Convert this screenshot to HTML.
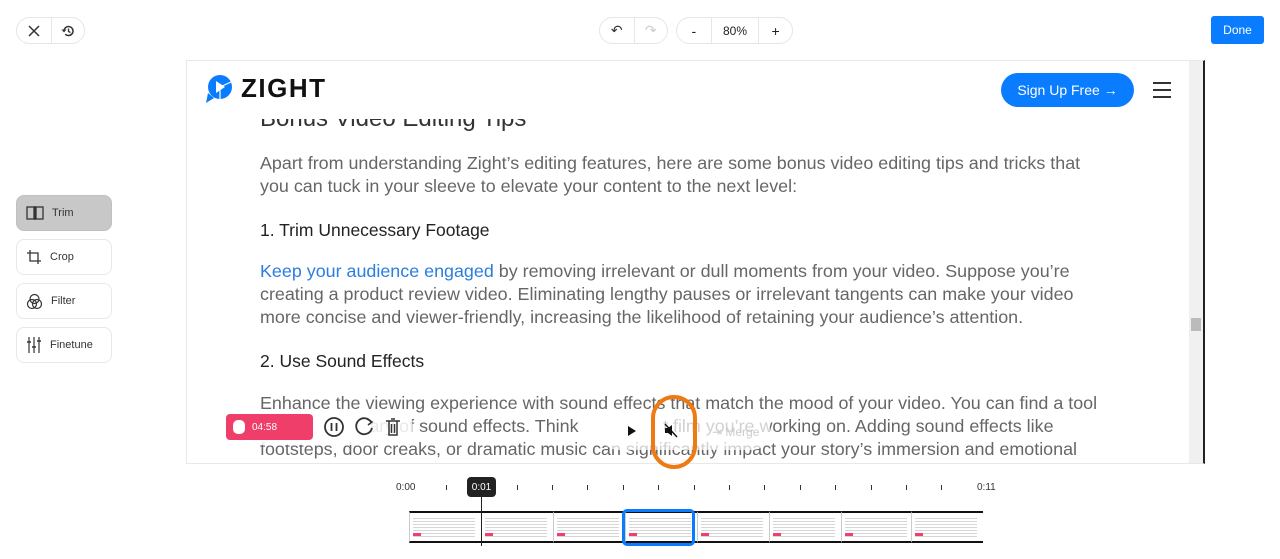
<!DOCTYPE html>
<html><head><meta charset="utf-8"><style>
*{box-sizing:border-box;margin:0;padding:0}
body{width:1280px;height:559px;background:#fff;font-family:"Liberation Sans",sans-serif;position:relative;overflow:hidden;color:#222}
.grp{position:absolute;top:17px;height:27px;border:1px solid #e6e6e6;border-radius:14px;display:flex;align-items:center;background:#fff}
.grp div{height:100%;display:flex;align-items:center;justify-content:center;font-size:12px}
.grp div+div{border-left:1px solid #e6e6e6}
.side{position:absolute;left:16px;width:96px;height:36px;border:1px solid #e8e8e8;border-radius:8px;display:flex;align-items:center;padding-left:9px;font-size:11px;color:#333;gap:8px}
.vid{position:absolute;left:186px;top:60px;width:1019px;height:404px;border:1px solid #e8e8e8;border-right:2px solid #222;overflow:hidden;background:#fff}
.t{position:absolute;left:73px;font-size:17.9px;color:#666;line-height:23px;white-space:nowrap}
.h{position:absolute;left:73px;font-size:17.5px;color:#222;white-space:nowrap}
.tick{position:absolute;top:485px;width:1px;height:5px;background:#333}
.fr{position:absolute;top:511px;width:72px;height:32px;border-top:2px solid #111;border-bottom:2px solid #111;border-left:1px solid #ccc;background:#fff;overflow:hidden}
.fr::before{content:"";position:absolute;left:3px;top:3px;width:62px;height:22px;background:repeating-linear-gradient(#fff 0 2px,#d6d6d6 2px 3px)}
.fr::after{content:"";position:absolute;left:3px;top:20px;width:8px;height:3px;background:#f03e6a}
</style></head><body>
<div class="grp" style="left:16px;width:69px"><div style="width:34px"><svg width="12" height="12" viewBox="0 0 12 12"><path d="M1 1L11 11M11 1L1 11" stroke="#333" stroke-width="1.5"/></svg></div><div style="width:34px"><svg width="14" height="14" viewBox="0 0 14 14"><path d="M3 7a4.5 4.5 0 1 1 1.3 3.2" fill="none" stroke="#333" stroke-width="1.5"/><path d="M0.5 5.5L3 8.5L5.5 5.5Z" fill="#333"/><path d="M7.5 4.5V7.5L9.5 8.5" fill="none" stroke="#333" stroke-width="1.3"/></svg></div></div>
<div class="grp" style="left:599px;width:69px"><div style="width:34px;color:#333;font-size:14px">↶</div><div style="width:34px;color:#ccc;font-size:14px">↷</div></div>
<div class="grp" style="left:676px;width:117px"><div style="width:34px;font-size:14px">-</div><div style="width:48px">80%</div><div style="width:34px;font-size:14px">+</div></div>
<div style="position:absolute;left:1211px;top:16px;width:53px;height:28px;background:#0a7cff;border-radius:3px;color:#fff;font-size:12px;display:flex;align-items:center;justify-content:center">Done</div>

<div class="side" style="top:195px;background:#c8c8c8;border-color:#c0c0c0"><svg width="18" height="14" viewBox="0 0 18 14"><rect x="1" y="1" width="7" height="12" fill="none" stroke="#333" stroke-width="1.3"/><rect x="10" y="1" width="7" height="12" fill="none" stroke="#333" stroke-width="1.3"/><path d="M9 0V14" stroke="#333"/></svg>Trim</div>
<div class="side" style="top:239px"><svg width="16" height="16" viewBox="0 0 16 16"><path d="M4 1V12H15M1 4H12V15" fill="none" stroke="#333" stroke-width="1.3"/></svg>Crop</div>
<div class="side" style="top:283px"><svg width="17" height="17" viewBox="0 0 17 17"><circle cx="8.5" cy="6" r="4.5" fill="none" stroke="#333" stroke-width="1.2"/><circle cx="6" cy="11" r="4.5" fill="none" stroke="#333" stroke-width="1.2"/><circle cx="11" cy="11" r="4.5" fill="none" stroke="#333" stroke-width="1.2"/></svg>Filter</div>
<div class="side" style="top:327px"><svg width="16" height="18" viewBox="0 0 16 18"><path d="M3 1V17M8 1V17M13 1V17" stroke="#333" stroke-width="1.2"/><path d="M1 6H5M6 11H10M11 5H15" stroke="#333" stroke-width="1.5"/></svg>Finetune</div>

<div class="vid">
<div class="h" style="top:44px;font-size:24px;color:#333">Bonus Video Editing Tips</div>
<div style="position:absolute;left:0;top:0;width:1003px;height:58px;background:#fff"></div>
<svg style="position:absolute;left:17px;top:12px" width="30" height="30" viewBox="0 0 30 30"><circle cx="16" cy="14" r="12" fill="#0a7cff"/><path d="M4 20L2 30L10 25Z" fill="#0a7cff"/><path d="M12 8L21 14L12 20Z" fill="#fff"/><path d="M16 14L16 26M16 14L27 9" stroke="#fff" stroke-width="1.2"/></svg>
<div style="position:absolute;left:54px;top:12px;font-size:26px;font-weight:bold;color:#111;letter-spacing:1.5px">ZIGHT</div>
<div style="position:absolute;left:814px;top:12px;width:133px;height:34px;border-radius:17px;background:#0a7cff;color:#fff;font-size:14px;display:flex;align-items:center;justify-content:center">Sign Up Free →</div>
<div style="position:absolute;left:966px;top:21px;width:18px;height:2px;background:#333;box-shadow:0 7px 0 #333,0 14px 0 #333"></div>
<div style="position:absolute;right:0;top:0;width:14px;height:402px;background:#f0f0f0"></div>
<div style="position:absolute;right:2px;top:257px;width:10px;height:13px;background:#bbb"></div>
<div class="t" style="top:91px">Apart from understanding Zight’s editing features, here are some bonus video editing tips and tricks that<br>you can tuck in your sleeve to elevate your content to the next level:</div>
<div class="h" style="top:159px">1. Trim Unnecessary Footage</div>
<div class="t" style="top:199px"><span style="color:#2a7de1">Keep your audience engaged</span> by removing irrelevant or dull moments from your video. Suppose you’re<br>creating a product review video. Eliminating lengthy pauses or irrelevant tangents can make your video<br>more concise and viewer-friendly, increasing the likelihood of retaining your audience’s attention.</div>
<div class="h" style="top:290px">2. Use Sound Effects</div>
<div class="t" style="top:331px">Enhance the viewing experience with sound effects that match the mood of your video. You can find a tool<br>&nbsp;&nbsp;&nbsp;&nbsp;&nbsp;&nbsp;&nbsp;&nbsp;&nbsp;&nbsp;&nbsp;&nbsp;&nbsp;&nbsp;&nbsp;&nbsp;&nbsp;&nbsp;&nbsp;&nbsp;&nbsp;&nbsp;ary of sound effects. Think &nbsp;&nbsp;&nbsp;&nbsp;&nbsp;&nbsp;&nbsp;&nbsp;&nbsp;&nbsp;&nbsp;&nbsp;&nbsp;&nbsp;&nbsp;&nbsp;t film you’re working on. Adding sound effects like<br>footsteps, door creaks, or dramatic music can significantly impact your story’s immersion and emotional</div>
</div>
<div style="position:absolute;left:222px;top:410px;width:190px;height:35px;background:rgba(255,255,255,.85);border-radius:6px"></div>
<div style="position:absolute;left:226px;top:414px;width:87px;height:26px;background:#f03e6a;border-radius:4px;color:#fff;font-size:10px;display:flex;align-items:center;padding-left:7px;gap:7px"><span style="width:12px;height:14px;background:#fff;border-radius:5px"></span>04:58</div>
<svg style="position:absolute;left:323px;top:416px" width="80" height="22" viewBox="0 0 80 22"><circle cx="11" cy="11" r="9" fill="none" stroke="#333" stroke-width="1.8"/><path d="M8.5 7V15M13.5 7V15" stroke="#333" stroke-width="1.8"/><path d="M48 6A8 8 0 1 0 49 12" fill="none" stroke="#333" stroke-width="1.8"/><path d="M44 3L49 6L45 9" fill="none" stroke="#333" stroke-width="1.6"/><path d="M63 5H77M66 5V19H74V5M68 3H72M68.5 8V17M71.5 8V17" fill="none" stroke="#333" stroke-width="1.5"/></svg>
<div style="position:absolute;left:600px;top:412px;width:170px;height:38px;background:rgba(255,255,255,.7);border-radius:18px"></div>
<svg style="position:absolute;left:628px;top:426px" width="8" height="10"><path d="M0 0L8 5L0 10Z" fill="#111"/></svg>
<svg style="position:absolute;left:664px;top:423px" width="14" height="15" viewBox="0 0 14 15"><path d="M1 5H4L8 2V13L4 10H1Z" fill="#111"/><path d="M1 1L13 14" stroke="#111" stroke-width="1.4"/></svg>
<div style="position:absolute;left:712px;top:425px;font-size:12px;color:#ccc">⇥ Merge</div>
<div style="position:absolute;left:651px;top:395px;width:46px;height:74px;border:4px solid #ef7a12;border-radius:23px"></div>

<div style="position:absolute;left:396px;top:482px;font-size:10px;color:#333">0:00</div>
<div style="position:absolute;left:977px;top:482px;font-size:10px;color:#333">0:11</div>
<div class="tick" style="left:446px"></div><div class="tick" style="left:517px"></div><div class="tick" style="left:552px"></div><div class="tick" style="left:587px"></div><div class="tick" style="left:623px"></div><div class="tick" style="left:658px"></div><div class="tick" style="left:694px"></div><div class="tick" style="left:729px"></div><div class="tick" style="left:764px"></div><div class="tick" style="left:800px"></div><div class="tick" style="left:835px"></div><div class="tick" style="left:871px"></div><div class="tick" style="left:906px"></div><div class="tick" style="left:941px"></div>
<div class="fr" style="left:409px"></div><div class="fr" style="left:481px"></div><div class="fr" style="left:553px"></div><div class="fr" style="left:625px"></div><div class="fr" style="left:697px"></div><div class="fr" style="left:769px"></div><div class="fr" style="left:841px"></div><div class="fr" style="left:911px;width:72px"></div>
<div style="position:absolute;left:622px;top:509px;width:73px;height:37px;border:3px solid #0a7cff;border-radius:5px"></div>
<div style="position:absolute;left:481px;top:490px;width:1px;height:56px;background:#222"></div>
<div style="position:absolute;left:467px;top:477px;width:29px;height:20px;background:#222;border-radius:4px;color:#fff;font-size:10px;display:flex;align-items:center;justify-content:center">0:01</div>
</body></html>
